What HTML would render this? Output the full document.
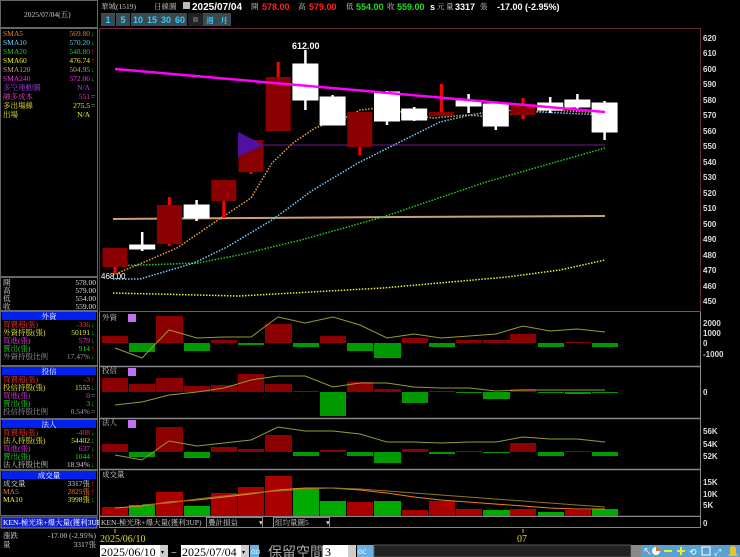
<!DOCTYPE html>
<html><head><meta charset="utf-8"><style>
html,body{margin:0;padding:0;background:#000;width:740px;height:557px;overflow:hidden}
svg{display:block;font-family:"Liberation Sans","Noto Sans CJK TC",sans-serif;font-size:8px}
.s{font-family:"Liberation Serif","Noto Serif CJK SC",serif;font-size:7.5px}
.ax{fill:#ddd;font-size:8px;font-weight:bold}
</style></head><body>
<svg width="740" height="557" viewBox="0 0 740 557" xmlns="http://www.w3.org/2000/svg">
<rect width="740" height="557" fill="#000"/>
<rect x="0.5" y="0.5" width="97" height="27" fill="none" stroke="#666"/>
<text x="24" y="17" class="s" fill="#ccc">2025/07/04(五)</text>
<rect x="0.5" y="28.5" width="97" height="248" fill="none" stroke="#666"/>
<g>
<text x="3" y="36" class="s" fill="#f08020">SMA5</text><text x="90" y="36" class="s" fill="#f08020" text-anchor="end">569.80</text><text x="91" y="36" class="s" fill="#0c0">↓</text>
<text x="3" y="45" class="s" fill="#6cf">SMA10</text><text x="90" y="45" class="s" fill="#6cf" text-anchor="end">570.20</text><text x="91" y="45" class="s" fill="#0c0">↓</text>
<text x="3" y="54" class="s" fill="#2c2">SMA20</text><text x="90" y="54" class="s" fill="#2c2" text-anchor="end">548.80</text><text x="91" y="54" class="s" fill="#f22">↑</text>
<text x="3" y="63" class="s" fill="#ee3">SMA60</text><text x="90" y="63" class="s" fill="#ee3" text-anchor="end">476.74</text><text x="91" y="63" class="s" fill="#f22">↑</text>
<text x="3" y="72" class="s" fill="#c9a070">SMA120</text><text x="90" y="72" class="s" fill="#c9a070" text-anchor="end">504.95</text><text x="91" y="72" class="s" fill="#0c0">↓</text>
<text x="3" y="81" class="s" fill="#e3e">SMA240</text><text x="90" y="81" class="s" fill="#e3e" text-anchor="end">572.06</text><text x="91" y="81" class="s" fill="#0c0">↓</text>
<text x="3" y="90" class="s" fill="#a040e0">多空連動圖</text><text x="90" y="90" class="s" fill="#a040e0" text-anchor="end">N/A</text>
<text x="3" y="99" class="s" fill="#e040c0">融多成本</text><text x="90" y="99" class="s" fill="#e040c0" text-anchor="end">551</text><text x="91" y="99" class="s" fill="#ccc">=</text>
<text x="3" y="108" class="s" fill="#ee3">多出場線</text><text x="90" y="108" class="s" fill="#ee3" text-anchor="end">275.5</text><text x="91" y="108" class="s" fill="#ccc">=</text>
<text x="3" y="117" class="s" fill="#ee3">出場</text><text x="90" y="117" class="s" fill="#ee3" text-anchor="end">N/A</text>
</g>
<rect x="0.5" y="277.5" width="97" height="33" fill="none" stroke="#666"/>
<text x="3" y="285" class="s" fill="#ddd">開</text><text x="96" y="285" class="s" fill="#ddd" text-anchor="end">578.00</text>
<text x="3" y="293" class="s" fill="#ddd">高</text><text x="96" y="293" class="s" fill="#ddd" text-anchor="end">579.00</text>
<text x="3" y="301" class="s" fill="#ddd">低</text><text x="96" y="301" class="s" fill="#ddd" text-anchor="end">554.00</text>
<text x="3" y="309" class="s" fill="#ddd">收</text><text x="96" y="309" class="s" fill="#ddd" text-anchor="end">559.00</text>
<rect x="0.5" y="311.5" width="97" height="54" fill="none" stroke="#666"/>
<rect x="2" y="312" width="94" height="8" fill="#0020f0"/><text x="49" y="319" class="s" fill="#fff" text-anchor="middle">外資</text>
<text x="3" y="327" class="s" fill="#f33">買賣超(張)</text><text x="90" y="327" class="s" fill="#f33" text-anchor="end">-336</text><text x="91" y="327" class="s" fill="#0c0">↓</text>
<text x="3" y="335" class="s" fill="#ee3">外資持股(張)</text><text x="90" y="335" class="s" fill="#ee3" text-anchor="end">50191</text><text x="91" y="335" class="s" fill="#0c0">↓</text>
<text x="3" y="343" class="s" fill="#e3e">買進(張)</text><text x="90" y="343" class="s" fill="#e3e" text-anchor="end">579</text><text x="91" y="343" class="s" fill="#0c0">↓</text>
<text x="3" y="351" class="s" fill="#2d2">賣出(張)</text><text x="90" y="351" class="s" fill="#2d2" text-anchor="end">914</text><text x="91" y="351" class="s" fill="#f22">↑</text>
<text x="3" y="359" class="s" fill="#999">外資持股比例</text><text x="90" y="359" class="s" fill="#999" text-anchor="end">17.47%</text><text x="91" y="359" class="s" fill="#0c0">↓</text>
<rect x="0.5" y="366.5" width="97" height="52" fill="none" stroke="#666"/>
<rect x="2" y="367" width="94" height="8" fill="#0020f0"/><text x="49" y="374" class="s" fill="#fff" text-anchor="middle">投信</text>
<text x="3" y="382" class="s" fill="#f33">買賣超(張)</text><text x="90" y="382" class="s" fill="#f33" text-anchor="end">-3</text><text x="91" y="382" class="s" fill="#f22">↑</text>
<text x="3" y="390" class="s" fill="#ee3">投信持股(張)</text><text x="90" y="390" class="s" fill="#ee3" text-anchor="end">1555</text><text x="91" y="390" class="s" fill="#0c0">↓</text>
<text x="3" y="398" class="s" fill="#e3e">買進(張)</text><text x="90" y="398" class="s" fill="#e3e" text-anchor="end">0</text><text x="91" y="398" class="s" fill="#ccc">=</text>
<text x="3" y="406" class="s" fill="#2d2">賣出(張)</text><text x="90" y="406" class="s" fill="#2d2" text-anchor="end">3</text><text x="91" y="406" class="s" fill="#0c0">↓</text>
<text x="3" y="414" class="s" fill="#999">投信持股比例</text><text x="90" y="414" class="s" fill="#999" text-anchor="end">0.54%</text><text x="91" y="414" class="s" fill="#ccc">=</text>
<rect x="0.5" y="419.5" width="97" height="50" fill="none" stroke="#666"/>
<rect x="2" y="420" width="94" height="8" fill="#0020f0"/><text x="49" y="427" class="s" fill="#fff" text-anchor="middle">法人</text>
<text x="3" y="435" class="s" fill="#f33">買賣超(張)</text><text x="90" y="435" class="s" fill="#f33" text-anchor="end">-408</text><text x="91" y="435" class="s" fill="#0c0">↓</text>
<text x="3" y="443" class="s" fill="#ee3">法人持股(張)</text><text x="90" y="443" class="s" fill="#ee3" text-anchor="end">54402</text><text x="91" y="443" class="s" fill="#0c0">↓</text>
<text x="3" y="451" class="s" fill="#e3e">買進(張)</text><text x="90" y="451" class="s" fill="#e3e" text-anchor="end">637</text><text x="91" y="451" class="s" fill="#0c0">↓</text>
<text x="3" y="459" class="s" fill="#2d2">賣出(張)</text><text x="90" y="459" class="s" fill="#2d2" text-anchor="end">1044</text><text x="91" y="459" class="s" fill="#f22">↑</text>
<text x="3" y="467" class="s" fill="#ccc">法人持股比例</text><text x="90" y="467" class="s" fill="#ccc" text-anchor="end">18.94%</text><text x="91" y="467" class="s" fill="#0c0">↓</text>
<rect x="0.5" y="470.5" width="97" height="45" fill="none" stroke="#666"/>
<rect x="2" y="471" width="94" height="8" fill="#0020f0"/><text x="49" y="478" class="s" fill="#fff" text-anchor="middle">成交量</text>
<text x="3" y="486" class="s" fill="#ddd">成交量</text><text x="90" y="486" class="s" fill="#ddd" text-anchor="end">3317張</text><text x="91" y="486" class="s" fill="#f22">↑</text>
<text x="3" y="494" class="s" fill="#f08020">MA5</text><text x="90" y="494" class="s" fill="#f08020" text-anchor="end">2825張</text><text x="91" y="494" class="s" fill="#f22">↑</text>
<text x="3" y="502" class="s" fill="#ee3">MA10</text><text x="90" y="502" class="s" fill="#ee3" text-anchor="end">3998張</text><text x="91" y="502" class="s" fill="#0c0">↓</text>
<rect x="1" y="517" width="96" height="11" fill="#1020d0" stroke="#888"/>
<text x="3" y="525" class="s" fill="#fff">KEN-極光珠+爆大量(獲利3UP)</text>
<text x="3" y="538" class="s" fill="#ccc">漲跌</text><text x="96" y="538" class="s" fill="#ccc" text-anchor="end">-17.00 (-2.95%)</text>
<text x="3" y="547" class="s" fill="#ccc">量</text><text x="96" y="547" class="s" fill="#ccc" text-anchor="end">3317張</text>

<text x="101" y="9" class="s" fill="#ccc">華城(1519)</text>
<text x="154" y="9" class="s" fill="#ccc">日線圖</text>
<rect x="183" y="2" width="7" height="7" fill="#bbb"/>
<text x="192" y="10" fill="#fff" font-weight="bold" font-size="10">2025/07/04</text>
<text x="251" y="9" class="s" fill="#ccc">開</text><text x="262" y="10" fill="#f22" font-weight="bold" font-size="9">578.00</text>
<text x="298" y="9" class="s" fill="#ccc">高</text><text x="309" y="10" fill="#f22" font-weight="bold" font-size="9">579.00</text>
<text x="346" y="9" class="s" fill="#ccc">低</text><text x="356" y="10" fill="#2d2" font-weight="bold" font-size="9">554.00</text>
<text x="387" y="9" class="s" fill="#ccc">收</text><text x="397" y="10" fill="#2d2" font-weight="bold" font-size="9">559.00</text>
<text x="430" y="10" fill="#fff" font-weight="bold" font-size="9">s</text><text x="437" y="9" class="s" fill="#ccc">元</text>
<text x="446" y="9" class="s" fill="#ccc">量</text><text x="455" y="10" fill="#fff" font-weight="bold" font-size="9">3317</text><text x="480" y="9" class="s" fill="#ccc">張</text>
<text x="497" y="10" fill="#fff" font-weight="bold" font-size="9">-17.00 (-2.95%)</text>
<g font-weight="bold">
<rect x="101" y="13" width="14" height="13" fill="#3a4a52"/><text x="108" y="23" fill="#3cf" text-anchor="middle" font-size="9">1</text>
<rect x="116" y="13" width="14" height="13" fill="#3a4a52"/><text x="123" y="23" fill="#3cf" text-anchor="middle" font-size="9">5</text>
<rect x="131" y="13" width="14" height="13" fill="#3a4a52"/><text x="138" y="23" fill="#3cf" text-anchor="middle" font-size="9">10</text>
<rect x="145" y="13" width="14" height="13" fill="#3a4a52"/><text x="152" y="23" fill="#3cf" text-anchor="middle" font-size="9">15</text>
<rect x="159" y="13" width="14" height="13" fill="#3a4a52"/><text x="166" y="23" fill="#3cf" text-anchor="middle" font-size="9">30</text>
<rect x="173" y="13" width="14" height="13" fill="#3a4a52"/><text x="180" y="23" fill="#3cf" text-anchor="middle" font-size="9">60</text>
<rect x="188" y="13" width="15" height="13" fill="#222"/><rect x="193" y="17" width="5" height="5" fill="#555"/>
<rect x="203" y="13" width="14" height="13" fill="#3a4a52"/><text x="210" y="23" class="s" fill="#3cf" text-anchor="middle">週</text>
<rect x="217" y="13" width="14" height="13" fill="#3a4a52"/><text x="224" y="23" class="s" fill="#3cf" text-anchor="middle">月</text>
</g>

<path d="M99.5 28.5H700.5V312M99.5 28.5V312" fill="none" stroke="#6a2a48"/>
<line x1="99" y1="311.5" x2="700" y2="311.5" stroke="#a04070"/>
<g>
<text x="703" y="41" class="ax">620</text><text x="703" y="56" class="ax">610</text><text x="703" y="72" class="ax">600</text><text x="703" y="87" class="ax">590</text><text x="703" y="103" class="ax">580</text><text x="703" y="118" class="ax">570</text><text x="703" y="134" class="ax">560</text><text x="703" y="149" class="ax">550</text><text x="703" y="165" class="ax">540</text><text x="703" y="180" class="ax">530</text><text x="703" y="196" class="ax">520</text><text x="703" y="211" class="ax">510</text><text x="703" y="227" class="ax">500</text><text x="703" y="242" class="ax">490</text><text x="703" y="258" class="ax">480</text><text x="703" y="273" class="ax">470</text><text x="703" y="289" class="ax">460</text><text x="703" y="304" class="ax">450</text>
</g>
<line x1="264" y1="145" x2="605" y2="145" stroke="#a020c0" stroke-width="0.8"/>
<polyline points="113,219 250,218 400,217 500,216.5 605,216" fill="none" stroke="#c9a070" stroke-width="2"/>
<polyline points="113,293 239,296 383,288 507,277 560,270 605,260" fill="none" stroke="#ee3" stroke-width="1.5" stroke-dasharray="1.5 1.5"/>
<polyline points="113,266 198,263 239,255 301,240 383,217 486,182 605,148" fill="none" stroke="#2c2" stroke-width="1.5" stroke-dasharray="1.5 1.5"/>
<polyline points="113,279 140,279 194,263 227,247 272,220 313,190 358,163 404,140 440,122 470,115 500,110 540,112 605,115" fill="none" stroke="#7cf" stroke-width="1.5" stroke-dasharray="1.5 1.5"/>
<polyline points="113,275 142,263 177,248 218,220 251,198 272,163 293,143 315,128 345,118 360,110 387,107 410,115 433,118 467,115 493,117 527,112 550,110 605,113" fill="none" stroke="#f0a040" stroke-width="1.5" stroke-dasharray="1.5 1.5"/>
<g fill="#8b0000">
<line x1="115" y1="266" x2="115" y2="274" stroke="#f00" stroke-width="3"/><rect x="102.5" y="248" width="25" height="19"/>
<line x1="169.4" y1="197" x2="169.4" y2="246" stroke="#f00" stroke-width="3"/><rect x="156.9" y="205" width="25" height="39"/>
<line x1="223.8" y1="180" x2="223.8" y2="218" stroke="#f00" stroke-width="3"/><rect x="211.3" y="180" width="25" height="21"/>
<line x1="251" y1="140" x2="251" y2="174" stroke="#f00" stroke-width="3"/><rect x="238.5" y="140" width="25" height="32"/>
<line x1="278.2" y1="62" x2="278.2" y2="131" stroke="#f00" stroke-width="3"/><rect x="265.7" y="77" width="25" height="54"/>
<line x1="359.8" y1="112" x2="359.8" y2="155" stroke="#f00" stroke-width="3"/><rect x="347.3" y="112" width="25" height="35"/>
<line x1="441.4" y1="84" x2="441.4" y2="116" stroke="#f00" stroke-width="3"/><rect x="428.9" y="112" width="25" height="4"/>
<line x1="523" y1="98" x2="523" y2="119" stroke="#f00" stroke-width="3"/><rect x="510.5" y="104" width="25" height="11"/>
</g>
<polygon points="238,132 264,145 238,157" fill="#5010a0"/>
<g fill="#fff" stroke="#fff">
<line x1="142.2" y1="232" x2="142.2" y2="251" stroke-width="2.5"/><rect x="129.7" y="245" width="25" height="4"/>
<line x1="196.6" y1="200" x2="196.6" y2="221" stroke-width="2.5"/><rect x="184.1" y="205" width="25" height="13"/>
<line x1="305.4" y1="50" x2="305.4" y2="110" stroke-width="2.5"/><rect x="292.9" y="64" width="25" height="36"/>
<line x1="332.6" y1="95" x2="332.6" y2="125" stroke-width="2.5"/><rect x="320.1" y="97" width="25" height="28"/>
<line x1="387" y1="91" x2="387" y2="125" stroke-width="2.5"/><rect x="374.5" y="92" width="25" height="29"/>
<line x1="414.2" y1="107" x2="414.2" y2="121" stroke-width="2.5"/><rect x="401.7" y="109" width="25" height="11"/>
<line x1="468.6" y1="94" x2="468.6" y2="113" stroke-width="2.5"/><rect x="456.1" y="101" width="25" height="5"/>
<line x1="495.8" y1="104" x2="495.8" y2="130" stroke-width="2.5"/><rect x="483.3" y="104" width="25" height="22"/>
<line x1="550.2" y1="97" x2="550.2" y2="113" stroke-width="2.5"/><rect x="537.7" y="103" width="25" height="7"/>
<line x1="577.4" y1="94" x2="577.4" y2="109" stroke-width="2.5"/><rect x="564.9" y="100" width="25" height="7"/>
<line x1="604.6" y1="101" x2="604.6" y2="140" stroke-width="2.5"/><rect x="592.1" y="103" width="25" height="29"/>
</g>
<polyline points="115,69 605,112" fill="none" stroke="#f0f" stroke-width="2.5"/>
<text x="292" y="49" fill="#fff" font-weight="bold" font-size="9">612.00</text>
<text x="101" y="279" fill="#fff" font-size="8">468.00</text>

<path d="M99.5 312V528M700.5 312V516" stroke="#888" fill="none"/>
<line x1="99" y1="366.5" x2="700" y2="366.5" stroke="#888" stroke-width="1.5"/>
<line x1="99" y1="418.5" x2="700" y2="418.5" stroke="#888" stroke-width="1.5"/>
<line x1="99" y1="469.5" x2="700" y2="469.5" stroke="#888" stroke-width="1.5"/>
<line x1="99" y1="516.5" x2="700" y2="516.5" stroke="#888" stroke-width="1.5"/>
<text x="102" y="320" class="s" fill="#ccc">外資</text><rect x="128" y="314" width="8" height="8" fill="#c070f0"/>
<text x="102" y="373" class="s" fill="#ccc">投信</text><rect x="128" y="368" width="8" height="8" fill="#c070f0"/>
<text x="102" y="425" class="s" fill="#ccc">法人</text><rect x="128" y="420" width="8" height="8" fill="#c070f0"/>
<text x="102" y="477" class="s" fill="#ccc">成交量</text>
<g><text x="703" y="326" class="ax">2000</text><text x="703" y="336" class="ax">1000</text><text x="703" y="346" class="ax">0</text><text x="703" y="357" class="ax">-1000</text>
<text x="703" y="395" class="ax">0</text>
<text x="703" y="434" class="ax">56K</text><text x="703" y="447" class="ax">54K</text><text x="703" y="459" class="ax">52K</text>
<text x="703" y="485" class="ax">15K</text><text x="703" y="497" class="ax">10K</text><text x="703" y="508" class="ax">5K</text><text x="703" y="526" class="ax">0</text></g>
<g>
<rect x="102" y="336" width="26" height="7" fill="#8b0000"/><rect x="129" y="343" width="26" height="9" fill="#090"/>
<rect x="156" y="316" width="27" height="27" fill="#8b0000"/><rect x="184" y="343" width="26" height="8" fill="#090"/>
<rect x="211" y="340" width="26" height="3" fill="#8b0000"/><rect x="238" y="343" width="26" height="2" fill="#090"/>
<rect x="265" y="324" width="27" height="19" fill="#8b0000"/><rect x="293" y="343" width="26" height="4" fill="#090"/>
<rect x="320" y="336" width="26" height="7" fill="#8b0000"/><rect x="347" y="343" width="26" height="8" fill="#090"/>
<rect x="374" y="343" width="27" height="15" fill="#090"/><rect x="402" y="338" width="26" height="5" fill="#8b0000"/>
<rect x="429" y="343" width="26" height="4" fill="#090"/><rect x="456" y="340" width="26" height="3" fill="#8b0000"/>
<rect x="483" y="340" width="27" height="3" fill="#8b0000"/><rect x="510" y="334" width="26" height="9" fill="#8b0000"/>
<rect x="538" y="343" width="26" height="4" fill="#090"/><rect x="565" y="342" width="26" height="1" fill="#8b0000"/>
<rect x="592" y="343" width="26" height="4" fill="#090"/>
</g>
<polyline points="115,348 142,358 169,330 197,338 224,337 251,337 278,317 305,323 333,317 360,325 387,338 414,334 441,338 469,336 496,334 523,326 550,331 577,329 605,332" fill="none" stroke="#9a9a30" stroke-width="1"/>
<g fill="#8b0000">
<rect x="102" y="378" width="26" height="14"/><rect x="129" y="384" width="26" height="8"/><rect x="156" y="378" width="27" height="14"/>
<rect x="184" y="386" width="26" height="6"/><rect x="211" y="385" width="26" height="7"/><rect x="238" y="374" width="26" height="18"/>
<rect x="265" y="384" width="27" height="8"/><rect x="293" y="391" width="26" height="1"/><rect x="347" y="382" width="26" height="10"/>
<rect x="374" y="389" width="27" height="3"/><rect x="429" y="391" width="26" height="1"/><rect x="510" y="389" width="26" height="3"/>
</g>
<g fill="#090">
<rect x="320" y="392" width="26" height="24"/><rect x="402" y="392" width="26" height="11"/><rect x="456" y="392" width="26" height="1"/>
<rect x="483" y="392" width="27" height="7"/><rect x="538" y="392" width="26" height="1"/><rect x="565" y="392" width="26" height="2"/><rect x="592" y="392" width="26" height="1"/>
</g>
<polyline points="115,405 142,402 169,395 197,392 224,388 251,380 278,376 305,376 333,387 360,383 387,383 414,387 441,388 469,388 496,391 523,390 550,390 577,390 605,390" fill="none" stroke="#9a9a30" stroke-width="1"/>
<g fill="#8b0000">
<rect x="102" y="444" width="26" height="8"/><rect x="156" y="427" width="27" height="25"/><rect x="211" y="447" width="26" height="5"/>
<rect x="238" y="449" width="26" height="3"/><rect x="265" y="435" width="27" height="17"/><rect x="320" y="450" width="26" height="2"/>
<rect x="402" y="449" width="26" height="3"/><rect x="456" y="451" width="26" height="1"/><rect x="510" y="443" width="26" height="9"/><rect x="565" y="451" width="26" height="1"/>
</g>
<g fill="#090">
<rect x="129" y="452" width="26" height="5"/><rect x="184" y="452" width="26" height="6"/><rect x="293" y="452" width="26" height="4"/>
<rect x="347" y="452" width="26" height="4"/><rect x="374" y="452" width="27" height="11"/><rect x="429" y="452" width="26" height="2"/>
<rect x="483" y="452" width="27" height="1"/><rect x="538" y="452" width="26" height="4"/><rect x="592" y="452" width="26" height="4"/>
</g>
<polyline points="115,455 142,460 169,441 197,446 224,443 251,440 278,427 305,431 333,431 360,434 387,442 414,442 441,443 469,442 496,442 523,437 550,439 577,439 605,442" fill="none" stroke="#9a9a30" stroke-width="1"/>
<g fill="#a00">
<rect x="102" y="507" width="26" height="9"/><rect x="156" y="492" width="27" height="24"/><rect x="211" y="493" width="26" height="23"/>
<rect x="238" y="487" width="26" height="29"/><rect x="265" y="476" width="27" height="40"/><rect x="347" y="502" width="26" height="14"/>
<rect x="402" y="510" width="26" height="6"/><rect x="429" y="501" width="26" height="15"/><rect x="456" y="509" width="26" height="7"/>
<rect x="510" y="509" width="26" height="7"/><rect x="565" y="510" width="26" height="6"/>
</g>
<g fill="#0a0">
<rect x="129" y="505" width="26" height="11"/><rect x="184" y="506" width="26" height="10"/><rect x="293" y="488" width="26" height="28"/>
<rect x="320" y="501" width="26" height="15"/><rect x="374" y="501" width="27" height="15"/><rect x="483" y="510" width="27" height="6"/>
<rect x="538" y="512" width="26" height="4"/><rect x="592" y="509" width="26" height="7"/>
</g>
<polyline points="115,508 142,506 169,502 197,500 224,497 251,494 278,490 305,488 332,488 360,490 387,493 414,497 441,500 468,502 495,504 523,506 550,508 577,509 605,509" fill="none" stroke="#f08020" stroke-width="1"/>
<polyline points="142,505 169,503 197,499 224,496 251,493 278,491 305,489 332,488 360,489 387,491 414,493 441,495 468,497 495,499 523,501 550,503 577,505 605,507" fill="none" stroke="#8a7a20" stroke-width="1"/>
<rect x="99.5" y="516.5" width="601" height="11" fill="#000" stroke="#888"/>
<text x="101" y="525" class="s" fill="#ccc">KEN-極光珠+爆大量(獲利3UP)</text>
<rect x="206.5" y="517.5" width="56" height="10" fill="#000" stroke="#888"/><text x="208" y="525" class="s" fill="#ccc">疊計損益</text><text x="259" y="525" class="s" fill="#ccc">▾</text>
<rect x="273.5" y="517.5" width="56" height="10" fill="#000" stroke="#888"/><text x="275" y="525" class="s" fill="#ccc">組均量圖5</text><text x="326" y="525" class="s" fill="#ccc">▾</text>
<line x1="115" y1="529" x2="115" y2="533" stroke="#cc3"/><line x1="523" y1="529" x2="523" y2="533" stroke="#cc3"/>
<text x="100" y="542" fill="#dd3" font-size="10" font-family="Liberation Serif">2025/06/10</text>
<text x="517" y="542" fill="#dd3" font-size="10" font-family="Liberation Serif">07</text>
<rect x="100" y="545" width="68" height="12" fill="#fff"/><text x="101" y="556" fill="#000" font-size="12" font-family="Liberation Serif">2025/06/10</text>
<rect x="160" y="545" width="8" height="12" fill="#ccc"/><text x="161" y="554" font-size="6" fill="#000">▾</text>
<text x="171" y="556" fill="#ccc" font-size="10">~</text>
<rect x="181" y="545" width="68" height="12" fill="#fff"/><text x="182" y="556" fill="#000" font-size="12" font-family="Liberation Serif">2025/07/04</text>
<rect x="241" y="545" width="8" height="12" fill="#ccc"/><text x="242" y="554" font-size="6" fill="#000">▾</text>
<rect x="250" y="545" width="9" height="12" fill="#6ab0e0"/><text x="251" y="554" font-size="6" fill="#fff">GO</text>
<text x="268" y="557" fill="#aaa" font-size="14" font-family="Noto Sans CJK TC,sans-serif">保留空間</text>
<rect x="323" y="545" width="25" height="12" fill="#fff"/><text x="325" y="556" fill="#000" font-size="12" font-family="Liberation Serif">3</text>
<rect x="348" y="545" width="8" height="12" fill="#ccc"/>
<rect x="357" y="545" width="9" height="12" fill="#6ab0e0"/><text x="358" y="554" font-size="6" fill="#fff">GO</text>
<rect x="366" y="545" width="8" height="12" fill="#6ab0e0"/>
<rect x="374" y="545" width="257" height="12" fill="#222" stroke="#555"/>
<rect x="631" y="545" width="10" height="12" fill="#888"/>
<rect x="641" y="545" width="99" height="12" fill="#5aa0d0"/>
<text x="643" y="555" fill="#fff" font-size="9">↖</text><circle cx="656" cy="551" r="4" fill="#fff"/><path d="M656 551L656 547A4 4 0 0 1 660 551Z" fill="#e07020"/>
<rect x="664" y="550" width="8" height="2" fill="#ee2"/><rect x="677" y="550" width="8" height="2" fill="#ee2"/><rect x="680" y="547" width="2" height="8" fill="#ee2"/>
<text x="689" y="555" fill="#fff" font-size="9">⟲</text><rect x="702" y="547" width="8" height="8" fill="none" stroke="#fff"/><text x="714" y="555" fill="#fff" font-size="9">⤢</text>
<path d="M728 556h10l-2-3v-4a3 3 0 0 0-6 0v4z" fill="#f0c020"/>
</svg>
</body></html>
